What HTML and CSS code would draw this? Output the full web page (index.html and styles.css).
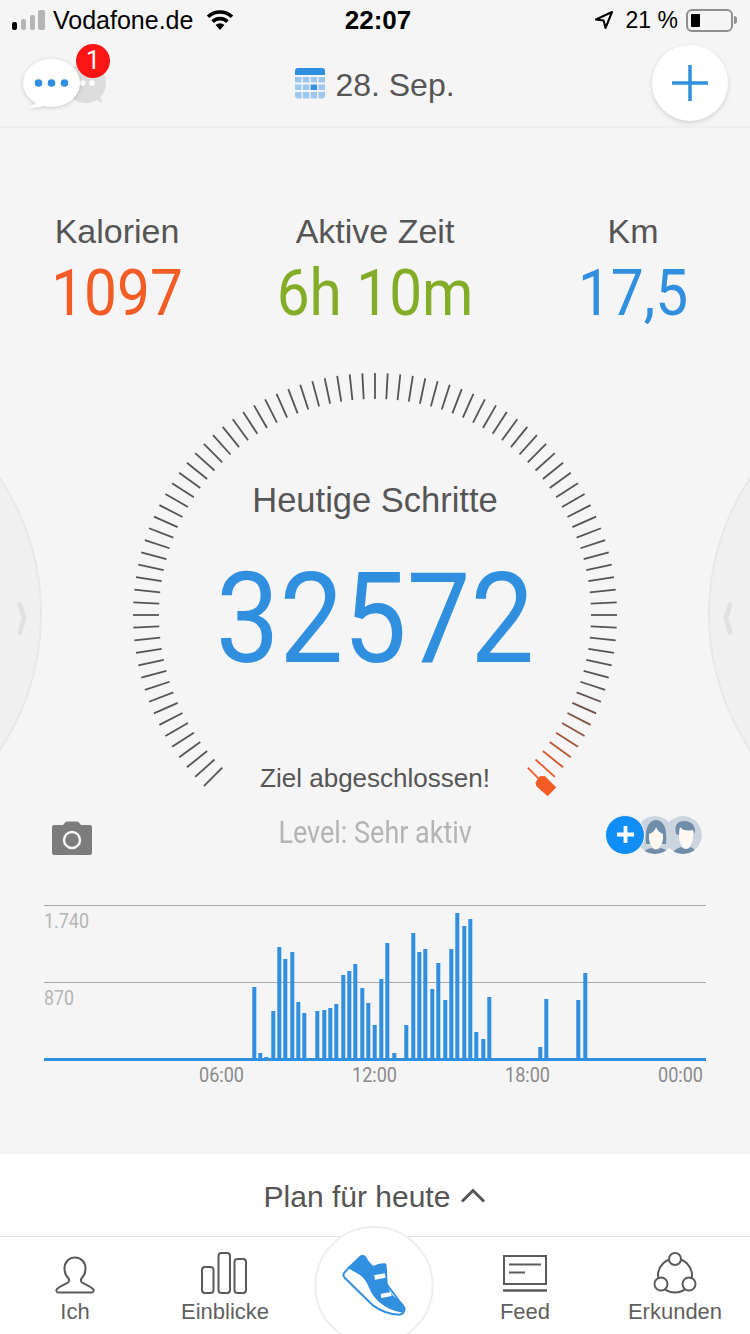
FILE: index.html
```html
<!DOCTYPE html>
<html lang="de">
<head>
<meta charset="utf-8">
<title>Heutige Schritte</title>
<link rel="stylesheet" href="styles.css">
</head>
<body>
<div class="phone">
  <div class="side side-left"><svg class="chev" viewBox="0 0 10 38"><path d="M2.5 3 L7.5 19 L2.5 35"/></svg></div>
  <div class="side side-right"><svg class="chev chev-flip" viewBox="0 0 10 38"><path d="M2.5 3 L7.5 19 L2.5 35"/></svg></div>

  <div class="status">
    <div class="status-left">
      <div class="signal"><i class="s1"></i><i class="s2"></i><i class="s3"></i><i class="s4"></i></div>
      <span>Vodafone.de</span>
      <svg class="wifi" viewBox="0 0 28 20"><path d="M14 20 L9.6 15 A6.4 6.4 0 0 1 18.4 15 Z"/><path class="wifi-arc" d="M6.6 11.6 A10.8 10.8 0 0 1 21.4 11.6"/><path class="wifi-arc" d="M2 6.8 A17.4 17.4 0 0 1 26 6.8"/></svg>
    </div>
    <div class="status-time">22:07</div>
    <div class="status-right">
      <svg class="nav" viewBox="0 0 20 20"><path d="M18 2 L2 9.5 L9.6 10.6 L11.5 18 Z"/></svg>
      <span class="pct">21 %</span>
      <div class="battery"><div class="battery-fill"></div></div>
      <div class="battery-nub"></div>
    </div>
  </div>

  <header class="header">
    <div class="chat">
      <svg class="chat-svg" viewBox="20 50 90 62">
        <ellipse class="bub-back" cx="86" cy="83" rx="20" ry="20"/>
        <path class="bub-back" d="M92 98 L103 103 L97 92 Z"/>
        <circle class="dot-w" cx="82.500" cy="83" r="2.800"/>
        <circle class="dot-w" cx="92" cy="83" r="2.800"/>
        <g class="bub-front">
          <ellipse cx="51.500" cy="83" rx="28.500" ry="24"/>
          <path d="M35 98 L36 102 Q34 106 27 107.500 Q38 108.500 46 105 Z"/>
        </g>
        <circle class="dot-b" cx="38.500" cy="83" r="3.800"/>
        <circle class="dot-b" cx="51.500" cy="83" r="3.800"/>
        <circle class="dot-b" cx="64.500" cy="83" r="3.800"/>
      </svg>
      <span class="badge">1</span>
    </div>
    <div class="date">
      <svg class="cal" viewBox="0 0 30 31">
        <path class="cal-top" d="M0 7 V3 a3 3 0 0 1 3-3 H27 a3 3 0 0 1 3 3 V7 Z"/>
        <g class="cal-cell">
          <rect x="0" y="9" width="6.500" height="5.500"/><rect x="7.800" y="9" width="6.500" height="5.500"/><rect x="15.600" y="9" width="6.500" height="5.500"/><rect x="23.500" y="9" width="6.500" height="5.500"/>
          <rect x="0" y="16.500" width="6.500" height="5.500"/><rect x="7.800" y="16.500" width="6.500" height="5.500"/><rect class="cal-on" x="15.600" y="16.500" width="6.500" height="5.500"/><rect x="23.500" y="16.500" width="6.500" height="5.500"/>
          <path d="M0 24 h6.500 v6.500 h-3.500 a3 3 0 0 1 -3 -3 Z"/><rect x="7.800" y="24" width="6.500" height="6.500"/><rect x="15.600" y="24" width="6.500" height="6.500"/><path d="M23.500 24 h6.500 v3.500 a3 3 0 0 1 -3 3 h-3.500 Z"/>
        </g>
      </svg>
      <span class="date-text">28. Sep.</span>
    </div>
    <div class="add-wrap">
      <div class="add"><svg class="add-icon" viewBox="0 0 36 36"><path d="M18 0 V36 M0 18 H36"/></svg></div>
    </div>
  </header>

  <section class="stats">
    <div class="stat"><div class="stat-label">Kalorien</div><div class="stat-num c-orange">1097</div></div>
    <div class="stat"><div class="stat-label">Aktive Zeit</div><div class="stat-num c-green">6h 10m</div></div>
    <div class="stat"><div class="stat-label">Km</div><div class="stat-num c-blue">17,5</div></div>
  </section>

  <section class="gauge">
    <svg class="gauge-svg" viewBox="0 0 500 435">
      <defs><line id="t" x1="0" y1="-242" x2="0" y2="-216"/></defs>
      <g class="ticks" transform="translate(250 250)">
        <use href="#t" transform="rotate(-135)"/><use href="#t" transform="rotate(-132)"/><use href="#t" transform="rotate(-129)"/><use href="#t" transform="rotate(-126)"/><use href="#t" transform="rotate(-123)"/><use href="#t" transform="rotate(-120)"/><use href="#t" transform="rotate(-117)"/><use href="#t" transform="rotate(-114)"/><use href="#t" transform="rotate(-111)"/><use href="#t" transform="rotate(-108)"/>
        <use href="#t" transform="rotate(-105)"/><use href="#t" transform="rotate(-102)"/><use href="#t" transform="rotate(-99)"/><use href="#t" transform="rotate(-96)"/><use href="#t" transform="rotate(-93)"/><use href="#t" transform="rotate(-90)"/><use href="#t" transform="rotate(-87)"/><use href="#t" transform="rotate(-84)"/><use href="#t" transform="rotate(-81)"/><use href="#t" transform="rotate(-78)"/>
        <use href="#t" transform="rotate(-75)"/><use href="#t" transform="rotate(-72)"/><use href="#t" transform="rotate(-69)"/><use href="#t" transform="rotate(-66)"/><use href="#t" transform="rotate(-63)"/><use href="#t" transform="rotate(-60)"/><use href="#t" transform="rotate(-57)"/><use href="#t" transform="rotate(-54)"/><use href="#t" transform="rotate(-51)"/><use href="#t" transform="rotate(-48)"/>
        <use href="#t" transform="rotate(-45)"/><use href="#t" transform="rotate(-42)"/><use href="#t" transform="rotate(-39)"/><use href="#t" transform="rotate(-36)"/><use href="#t" transform="rotate(-33)"/><use href="#t" transform="rotate(-30)"/><use href="#t" transform="rotate(-27)"/><use href="#t" transform="rotate(-24)"/><use href="#t" transform="rotate(-21)"/><use href="#t" transform="rotate(-18)"/>
        <use href="#t" transform="rotate(-15)"/><use href="#t" transform="rotate(-12)"/><use href="#t" transform="rotate(-9)"/><use href="#t" transform="rotate(-6)"/><use href="#t" transform="rotate(-3)"/><use href="#t" transform="rotate(0)"/><use href="#t" transform="rotate(3)"/><use href="#t" transform="rotate(6)"/><use href="#t" transform="rotate(9)"/><use href="#t" transform="rotate(12)"/>
        <use href="#t" transform="rotate(15)"/><use href="#t" transform="rotate(18)"/><use href="#t" transform="rotate(21)"/><use href="#t" transform="rotate(24)"/><use href="#t" transform="rotate(27)"/><use href="#t" transform="rotate(30)"/><use href="#t" transform="rotate(33)"/><use href="#t" transform="rotate(36)"/><use href="#t" transform="rotate(39)"/><use href="#t" transform="rotate(42)"/>
        <use href="#t" transform="rotate(45)"/><use href="#t" transform="rotate(48)"/><use href="#t" transform="rotate(51)"/><use href="#t" transform="rotate(54)"/><use href="#t" transform="rotate(57)"/><use href="#t" transform="rotate(60)"/><use href="#t" transform="rotate(63)"/><use href="#t" transform="rotate(66)"/><use href="#t" transform="rotate(69)"/><use href="#t" transform="rotate(72)"/>
        <use href="#t" transform="rotate(75)"/><use href="#t" transform="rotate(78)"/><use href="#t" transform="rotate(81)"/><use href="#t" transform="rotate(84)"/><use href="#t" transform="rotate(87)"/><use href="#t" transform="rotate(90)"/><use href="#t" transform="rotate(93)"/><use href="#t" transform="rotate(96)"/><use href="#t" transform="rotate(99)"/><use href="#t" transform="rotate(102)"/><use href="#t" transform="rotate(105)"/>
        <use href="#t" transform="rotate(108)"/>
        <use href="#t" stroke="#5f5250" transform="rotate(111)"/>
        <use href="#t" stroke="#6d5148" transform="rotate(114)"/>
        <use href="#t" stroke="#7d5242" transform="rotate(117)"/>
        <use href="#t" stroke="#90533d" transform="rotate(120)"/>
        <use href="#t" stroke="#a55438" transform="rotate(123)"/>
        <use href="#t" stroke="#bb5632" transform="rotate(126)"/>
        <use href="#t" stroke="#d2572d" transform="rotate(129)"/>
        <use href="#t" stroke="#e55928" transform="rotate(132)"/>
        <use href="#t" stroke="#f45c24" transform="rotate(135)"/>
      </g>
      <path class="marker" d="M411 417.700 L415 411.700 L420 411.700 L430.700 422.300 L422.700 430.700 L411.700 421 Z"/>
    </svg>
    <div class="gauge-text">
      <div class="gauge-title">Heutige Schritte</div>
      <div class="gauge-num">32572</div>
      <div class="gauge-goal">Ziel abgeschlossen!</div>
    </div>
  </section>

  <section class="level">
    <svg class="camera" viewBox="0 0 40 34"><path class="cam-body" d="M2 4 H11 L14 0.500 H26 L29 4 H38 a2 2 0 0 1 2 2 V32 a2 2 0 0 1 -2 2 H2 a2 2 0 0 1 -2 -2 V6 a2 2 0 0 1 2 -2 Z"/><circle class="cam-lens" cx="20" cy="19" r="8"/></svg>
    <div class="level-text">Level: Sehr aktiv</div>
    <div class="people">
      <div class="person person-c">
        <svg viewBox="0 0 38 38"><circle class="av-bg" cx="19" cy="19" r="19"/><path class="av-dark" d="M8 38 Q10 33 17 31 Q22 35 27 31 Q31 33 33 38 Z"/><path class="av-face" d="M15 12 H29 V22 Q28 31 22 33 Q16 31 15 22 Z"/><path class="av-dark" d="M12 18 Q9 5 21 5 Q32 6 31 18 L29 14 Q20 16 16 11 Q15 15 15 19 Z"/></svg>
      </div>
      <div class="person person-b">
        <svg viewBox="0 0 38 38"><circle class="av-bg" cx="19" cy="19" r="19"/><path class="av-dark" d="M10 28 Q8 5 20 4 Q32 5 30 28 Z"/><path class="av-face" d="M13 18 Q19 16 20 11 Q22 16 27 18 V23 Q26 31 20 34 Q14 31 13 23 Z"/><path class="av-dark" d="M6 38 Q9 33 16 32 Q20 35 24 32 Q31 33 33 38 Z"/></svg>
      </div>
      <div class="person-add"><svg viewBox="0 0 20 20"><path d="M10 1 V19 M1 10 H19"/></svg></div>
    </div>
  </section>

  <section class="chart">
    <svg class="chart-svg" viewBox="0 866 750 288">
      <path class="grid-line" d="M44 905.500 H706 M44 982.500 H706"/>
      <text class="axis-y" x="44" y="928" textLength="45" lengthAdjust="spacingAndGlyphs">1.740</text>
      <text class="axis-y" x="44" y="1005" textLength="30" lengthAdjust="spacingAndGlyphs">870</text>
      <g class="bars">
        <rect x="252.300" y="987" width="4" height="72"/><rect x="258.300" y="1053" width="4" height="6"/><rect x="264.300" y="1057" width="4" height="2"/><rect x="271.300" y="1011" width="4" height="48"/><rect x="277.300" y="947" width="4" height="112"/><rect x="283.300" y="959" width="4" height="100"/><rect x="290.300" y="952" width="4" height="107"/><rect x="296.300" y="1002" width="4" height="57"/><rect x="302.300" y="1013" width="4" height="46"/>
        <rect x="315.300" y="1011" width="4" height="48"/><rect x="322.300" y="1010" width="4" height="49"/><rect x="328.300" y="1008" width="4" height="51"/><rect x="334.300" y="1004" width="4" height="55"/><rect x="341.300" y="975" width="4" height="84"/><rect x="347.300" y="971" width="4" height="88"/><rect x="353.300" y="964" width="4" height="95"/><rect x="360.300" y="988" width="4" height="71"/><rect x="366.300" y="1003" width="4" height="56"/>
        <rect x="372.700" y="1025" width="4" height="34"/><rect x="379.300" y="979" width="4" height="80"/><rect x="385.300" y="943" width="4" height="116"/><rect x="392.300" y="1053" width="4" height="6"/><rect x="404.300" y="1025" width="4" height="34"/><rect x="411.300" y="933" width="4" height="126"/><rect x="417.300" y="952" width="4" height="107"/><rect x="423.300" y="949" width="4" height="110"/><rect x="430.300" y="989" width="4" height="70"/>
        <rect x="436.300" y="963" width="4" height="96"/><rect x="443.300" y="1000" width="4" height="59"/><rect x="449.300" y="949" width="4" height="110"/><rect x="455.300" y="913" width="4" height="146"/><rect x="462.300" y="926" width="4" height="133"/><rect x="468.300" y="919" width="4" height="140"/><rect x="474.300" y="1032" width="4" height="27"/><rect x="481.300" y="1039" width="4" height="20"/><rect x="487.300" y="997" width="4" height="62"/>
        <rect x="538.300" y="1047" width="4" height="12"/><rect x="544.300" y="999" width="4" height="60"/><rect x="576.300" y="1000" width="4" height="59"/><rect x="583.300" y="973" width="4" height="86"/>
        <rect x="44" y="1058" width="662" height="3"/>
      </g>
      <text class="axis-x" x="199" y="1082" textLength="45" lengthAdjust="spacingAndGlyphs">06:00</text>
      <text class="axis-x" x="352" y="1082" textLength="45" lengthAdjust="spacingAndGlyphs">12:00</text>
      <text class="axis-x" x="505" y="1082" textLength="45" lengthAdjust="spacingAndGlyphs">18:00</text>
      <text class="axis-x" x="658" y="1082" textLength="45" lengthAdjust="spacingAndGlyphs">00:00</text>
    </svg>
  </section>

  <section class="plan">
    <span>Plan für heute</span>
    <svg class="plan-chev" viewBox="0 0 26 15"><path d="M2 13.500 L13 2.500 L24 13.500"/></svg>
  </section>

  <nav class="tabs">
    <div class="tab">
      <svg class="tab-icon" viewBox="0 0 60 44"><path d="M30 6.500 c-6.500 0 -10.500 5 -10.500 11 c0 4 1.500 7.500 4 10 c1 1 .8 3 -.5 4 c-3 2 -8 3.500 -11 6.500 c-1 1 -.7 3.500 1 3.500 h34 c1.700 0 2 -2.500 1 -3.500 c-3 -3 -8 -4.500 -11 -6.500 c-1.300 -1 -1.500 -3 -.5 -4 c2.500 -2.500 4 -6 4 -10 c0 -6 -4 -11 -10.500 -11 Z"/></svg>
      <span>Ich</span>
    </div>
    <div class="tab">
      <svg class="tab-icon" viewBox="0 0 60 44"><rect x="7" y="16" width="11.500" height="26" rx="3"/><rect x="23.500" y="2" width="11.500" height="40" rx="3"/><rect x="39.500" y="8" width="11.500" height="34" rx="3"/></svg>
      <span>Einblicke</span>
    </div>
    <div class="tab tab-spacer"></div>
    <div class="tab">
      <svg class="tab-icon" viewBox="0 0 60 44"><rect x="9" y="5" width="42" height="28"/><path d="M14 13.500 H46 M14 21.500 H30"/><path class="thick" d="M8 39.500 H52"/></svg>
      <span>Feed</span>
    </div>
    <div class="tab">
      <svg class="tab-icon" viewBox="0 0 60 44"><circle cx="30" cy="24.500" r="17"/><circle class="white" cx="30" cy="8" r="6"/><circle class="white" cx="16" cy="33" r="6.500"/><circle class="white" cx="44" cy="33" r="6.500"/></svg>
      <span>Erkunden</span>
    </div>
    <svg class="run" viewBox="0 0 390 327">
      <circle class="run-ring" cx="192" cy="182" r="176"/>
      <path class="shoe-sole" d="M103 143 Q97 150 104 158 L190 242 Q225 268 268 269 Q282 268 284 250 L232 180 L120 125 Z"/>
      <path class="shoe-upper" d="M112 128 L150 92 Q160 86 167 94 Q176 112 190 123 Q205 114 224 115 Q230 116 230 122 L233 178 Q237 200 250 213 L276 234 Q288 245 282 256 Q278 264 272 262 Q235 255 208 232 Q186 212 178 190 Q168 164 150 150 Z"/>
      <path class="shoe-band" d="M192 151 L224 145 L227 158 L195 164 Z M212 207 L242 201 L245 213 L214 219 Z"/>
    </svg>
  </nav>
</div>
</body>
</html>
```
FILE: styles.css
```css
* { box-sizing: border-box; }
html, body { margin: 0; padding: 0; background: #f5f5f5; }
body { font-family: "Liberation Sans", Arial, sans-serif; color: #555; }
.phone {
  position: relative;
  width: 750px;
  height: 1334px;
  overflow: hidden;
  background: #f5f5f5;
  display: flex;
  flex-direction: column;
}

/* side discs */
.side {
  position: absolute;
  top: 368px;
  width: 492px;
  height: 492px;
  border-radius: 50%;
  background: #f0f0f0;
  border: 2px solid #e8e8e8;
  display: flex;
  align-items: center;
}
.side-left { left: -450px; justify-content: flex-end; padding-right: 13px; }
.side-right { right: -450px; justify-content: flex-start; padding-left: 13px; }
.chev { width: 10px; height: 33px; margin-top: 9px; }
.chev path { fill: none; stroke: #e0e0e0; stroke-width: 5.5; stroke-linecap: round; stroke-linejoin: round; }
.chev-flip { transform: scaleX(-1); }

/* status bar */
.status {
  height: 40px;
  display: grid;
  grid-template-columns: 1fr auto 1fr;
  align-items: center;
  color: #000;
  font-size: 25px;
  position: relative;
  flex: none;
}
.status-left { display: flex; align-items: center; padding-left: 12px; }
.signal { display: flex; align-items: flex-end; gap: 3.5px; height: 20px; width: 33px; margin-right: 8px; }
.signal i { display: block; width: 5.500px; border-radius: 2px; background: #b5b5b5; }
.signal .s1 { height: 8px; background: #000; }
.signal .s2 { height: 11px; }
.signal .s3 { height: 15px; }
.signal .s4 { height: 20px; width: 7px; }
.wifi { width: 28px; height: 20px; margin-left: 13px; }
.wifi path { fill: #000; }
.wifi .wifi-arc { fill: none; stroke: #000; stroke-width: 3.600; }
.status-time { font-weight: 700; font-size: 26px; margin-left: 6px; }
.status-right { display: flex; align-items: center; justify-content: flex-end; padding-right: 13px; }
.nav { width: 20px; height: 20px; margin-right: 12px; }
.nav path { fill: none; stroke: #000; stroke-width: 2; stroke-linejoin: round; }
.pct { font-size: 23px; margin-right: 8px; }
.battery { width: 47px; height: 23px; border: 2px solid #8f8f8f; border-radius: 6px; padding: 3px; }
.battery-fill { width: 9px; height: 100%; background: #000; border-radius: 1px; }
.battery-nub { width: 3px; height: 8px; background: #8f8f8f; border-radius: 0 3px 3px 0; margin-left: 1px; }

/* header */
.header {
  height: 88px;
  flex: none;
  display: grid;
  grid-template-columns: 1fr auto 1fr;
  align-items: center;
  border-bottom: 2px solid #eeeeee;
  position: relative;
}
.chat { position: relative; width: 110px; height: 86px; }
.chat-svg { display: block; width: 90px; height: 62px; margin: 10px 0 0 20px; }
.bub-back { fill: #dddddd; }
.dot-w { fill: #ffffff; }
.bub-front { fill: #ffffff; filter: drop-shadow(0 1px 2px rgba(0,0,0,.18)); }
.dot-b { fill: #318fe0; }
.badge {
  position: absolute;
  left: 76px;
  top: 4px;
  width: 34px;
  height: 34px;
  border-radius: 50%;
  background: #fb1414;
  color: #fff;
  font-family: Roboto, sans-serif;
  font-size: 25px;
  line-height: 34px;
  text-align: center;
}
.date { display: flex; align-items: center; gap: 10px; font-size: 32px; color: #555; }
.date-text { padding-top: 4px; }
.cal { width: 30px; height: 31px; }
.cal-top { fill: #318fe0; }
.cal-cell { fill: #9dc7ef; }
.cal-cell .cal-on { fill: #318fe0; }
.add-wrap { display: flex; justify-content: flex-end; padding-right: 22px; }
.add {
  width: 76px;
  height: 76px;
  border-radius: 50%;
  background: #fff;
  box-shadow: 0 2px 5px rgba(0,0,0,.14);
  display: flex;
  align-items: center;
  justify-content: center;
}
.add-icon { width: 36px; height: 36px; }
.add-icon path { stroke: #318fe0; stroke-width: 3.500; fill: none; }

/* stats */
.stats {
  flex: none;
  display: grid;
  grid-template-columns: 234px 1fr 234px;
  padding-top: 83px;
  text-align: center;
}
.stat-label { font-size: 34px; line-height: 40px; color: #555; }
.stat-num {
  font-family: Roboto, sans-serif;
  font-size: 65px;
  line-height: 80px;
  padding-top: 2px;
  transform: scaleX(.9);
}
.c-orange { color: #f45c25; }
.c-green { color: #83ad26; }
.c-blue { color: #318fe0; }

/* gauge */
.gauge {
  flex: none;
  width: 500px;
  height: 435px;
  margin: 32px auto 0;
  display: grid;
}
.gauge > * { grid-area: 1 / 1; }
.gauge-svg { display: block; width: 500px; height: 435px; }
.ticks { stroke: #555; stroke-width: 1.800; }
.marker { fill: #f45c25; stroke: #f45c25; stroke-width: 1; stroke-linejoin: round; }
.gauge-text { text-align: center; padding-top: 115px; }
.gauge-title { font-size: 34.500px; line-height: 40px; }
.gauge-num {
  font-family: Roboto, sans-serif;
  font-size: 126px;
  line-height: 120px;
  color: #318fe0;
  margin-top: 39px;
  transform: scaleX(.9);
}
.gauge-goal { font-size: 26px; line-height: 32px; margin-top: 83px; }

/* level row */
.level {
  flex: none;
  height: 66px;
  display: grid;
  grid-template-columns: 1fr auto 1fr;
  align-items: center;
  padding: 0 48px 0 52px;
}
.camera { width: 40px; height: 34px; margin-top: 10px; }
.cam-body { fill: #7c7c7c; }
.cam-lens { fill: none; stroke: #f5f5f5; stroke-width: 2.500; }
.level-text {
  font-family: Roboto, sans-serif;
  font-size: 31px;
  line-height: 36px;
  color: #b4b4b4;
  margin-right: 4px;
  transform: scaleX(.87);
}
.people { display: flex; flex-direction: row-reverse; justify-content: flex-start; margin-top: 4px; }
.person { width: 38px; height: 38px; margin-left: -10px; position: relative; border-radius: 50%; overflow: hidden; }
.person svg { display: block; width: 38px; height: 38px; }
.person-c { z-index: 1; }
.person-b { z-index: 2; }
.av-bg { fill: #cbd5df; }
.av-dark { fill: #6f8ca8; }
.av-face { fill: #fff8f2; }
.person-add {
  position: relative;
  z-index: 3;
  width: 40px;
  height: 40px;
  margin-right: 1px;
  border-radius: 50%;
  background: #118ef5;
  border: 1px solid #f5f5f5;
  display: flex;
  align-items: center;
  justify-content: center;
  margin-top: -1px;
}
.person-add svg { width: 19px; height: 19px; }
.person-add path { stroke: #fff; stroke-width: 4; fill: none; }

/* chart */
.chart { flex: 1; min-height: 0; }
.chart-svg { display: block; width: 750px; height: 288px; }
.grid-line { stroke: #a8a8a8; stroke-width: 1; fill: none; }
.bars { fill: #318fe0; }
.axis-y { font-family: Roboto, sans-serif; font-size: 20px; fill: #b4b4b4; }
.axis-x { font-family: Roboto, sans-serif; font-size: 20px; fill: #8a8a8a; }

/* plan */
.plan {
  flex: none;
  height: 83px;
  background: #fff;
  border-bottom: 1px solid #e0e0e0;
  display: flex;
  align-items: center;
  justify-content: center;
  gap: 10px;
  padding-top: 4px;
  font-size: 30px;
  color: #555;
}
.plan-chev { width: 26px; height: 15px; margin-top: -3px; }
.plan-chev path { fill: none; stroke: #555; stroke-width: 3; }

/* tabs */
.tabs {
  flex: none;
  height: 97px;
  background: #fff;
  display: grid;
  grid-template-columns: repeat(5, 1fr);
  position: relative;
}
.tab {
  display: flex;
  flex-direction: column;
  align-items: center;
  padding-top: 14px;
  font-size: 22px;
  color: #5f5f5f;
}
.tab span { line-height: 24px; margin-top: 5px; }
.tab-icon { display: block; width: 60px; height: 44px; }
.tab-icon * { fill: none; stroke: #5a5a5a; stroke-width: 2; }
.tab-icon .thick { stroke-width: 2.500; }
.tab-icon .white { fill: #fff; }
.run {
  position: absolute;
  left: 310px;
  top: -12px;
  width: 130px;
  height: 109px;
}
.run-ring { fill: #fff; stroke: #eeeeee; stroke-width: 6; }
.shoe-sole { fill: #fff; stroke: #318fe0; stroke-width: 6; stroke-linejoin: round; }
.shoe-upper { fill: #318fe0; }
.shoe-band { fill: #fff; }
```
